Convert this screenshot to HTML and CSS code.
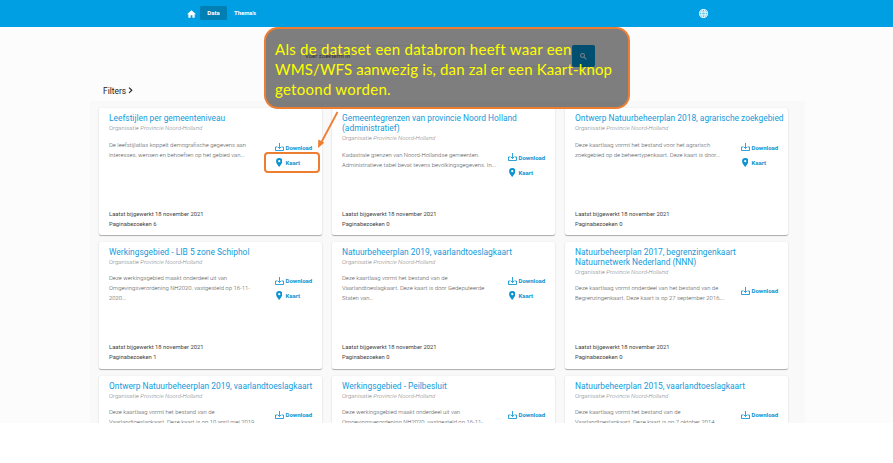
FILE: index.html
```
<!DOCTYPE html>
<html lang="nl">
<head>
<meta charset="utf-8">
<title>Data</title>
<link rel="stylesheet" href="styles.css">
</head>
<body>
<svg width="0" height="0" class="defs">
  <symbol id="dl" viewBox="0 0 18 16"><path d="M4.500 8H1v7h16V8h-3.500M9 0v11M5.500 7.500L9 11l3.500-3.500" fill="none" stroke="currentColor" stroke-width="1.700"/></symbol>
  <symbol id="pin" viewBox="0 0 14 20"><path fill="currentColor" fill-rule="evenodd" d="M7 0a7 7 0 0 0-7 7c0 5.200 7 13 7 13s7-7.800 7-13a7 7 0 0 0-7-7zm0 9.500a2.500 2.500 0 1 1 0-5 2.500 2.500 0 0 1 0 5z"/></symbol>
</svg>
<div class="app">
  <header>
    <nav>
      <svg class="home" viewBox="2 3 20 17"><path fill="#fff" d="M10 20v-6h4v6h5v-8h3L12 3 2 12h3v8z"/></svg>
      <a class="active">Data</a><a class="link">Thema's</a>
    </nav>
    <svg class="globe" viewBox="0 0 20 20" fill="none" stroke="#fff" stroke-width="2"><circle cx="10" cy="10" r="9" fill="#fff" fill-opacity=".35"/><ellipse cx="10" cy="10" rx="4" ry="9"/><path d="M2 7h16M2 13h16"/></svg>
  </header>
  <div class="search"><span>Voer zoekterm in</span><button><svg viewBox="0 0 18 18" fill="none" stroke="#fff" stroke-width="2.600"><circle cx="6.500" cy="6.500" r="5"/><path d="M10.500 10.500l6 6"/></svg></button></div>
  <div class="filters">Filters <svg viewBox="0 0 6 8"><path d="M1.200 .8L4.600 4 1.200 7.200" fill="none" stroke="#222" stroke-width="1.400"/></svg></div>
  <main>
    <article>
      <h2>Leefstijlen per gemeenteniveau</h2><p class="org">Organisatie <i>Provincie Noord-Holland</i></p>
      <div class="row"><p class="desc">De leefstijlatlas koppelt demografische gegevens aan<br>interesses, wensen en behoeften op het gebied van...</p>
      <div class="acts"><a><svg class="dl"><use href="#dl"/></svg>Download</a><a><svg class="pin"><use href="#pin"/></svg>Kaart</a></div></div>
      <footer>Laatst bijgewerkt 18 november 2021<br>Paginabezoeken 6</footer>
    </article>
    <article>
      <h2>Gemeentegrenzen van provincie Noord Holland<br>(administratief)</h2><p class="org">Organisatie <i>Provincie Noord-Holland</i></p>
      <div class="row"><p class="desc">Kadastrale grenzen van Noord-Hollandse gemeenten.<br>Administratieve tabel bevat tevens bevolkingsgegevens. In...</p>
      <div class="acts"><a><svg class="dl"><use href="#dl"/></svg>Download</a><a><svg class="pin"><use href="#pin"/></svg>Kaart</a></div></div>
      <footer>Laatst bijgewerkt 18 november 2021<br>Paginabezoeken 0</footer>
    </article>
    <article>
      <h2>Ontwerp Natuurbeheerplan 2018, agrarische zoekgebied</h2><p class="org">Organisatie <i>Provincie Noord-Holland</i></p>
      <div class="row"><p class="desc">Deze kaartlaag vormt het bestand voor het agrarisch<br>zoekgebied op de beheertypenkaart. Deze kaart is door...</p>
      <div class="acts"><a><svg class="dl"><use href="#dl"/></svg>Download</a><a><svg class="pin"><use href="#pin"/></svg>Kaart</a></div></div>
      <footer>Laatst bijgewerkt 18 november 2021<br>Paginabezoeken 0</footer>
    </article>
    <article>
      <h2 class="wide">Werkingsgebied - LIB 5 zone Schiphol</h2><p class="org">Organisatie <i>Provincie Noord-Holland</i></p>
      <div class="row"><p class="desc">Deze werkingsgebied maakt onderdeel uit van<br>Omgevingsverordening NH2020, vastgesteld op 16-11-<br>2020...</p>
      <div class="acts"><a><svg class="dl"><use href="#dl"/></svg>Download</a><a><svg class="pin"><use href="#pin"/></svg>Kaart</a></div></div>
      <footer>Laatst bijgewerkt 18 november 2021<br>Paginabezoeken 1</footer>
    </article>
    <article>
      <h2>Natuurbeheerplan 2019, vaarlandtoeslagkaart</h2><p class="org">Organisatie <i>Provincie Noord-Holland</i></p>
      <div class="row"><p class="desc">Deze kaartlaag vormt het bestand van de<br>Vaarlandtoeslagkaart. Deze kaart is door Gedeputeerde<br>Staten van...</p>
      <div class="acts"><a><svg class="dl"><use href="#dl"/></svg>Download</a><a><svg class="pin"><use href="#pin"/></svg>Kaart</a></div></div>
      <footer>Laatst bijgewerkt 18 november 2021<br>Paginabezoeken 0</footer>
    </article>
    <article>
      <h2>Natuurbeheerplan 2017, begrenzingenkaart<br>Natuurnetwerk Nederland (NNN)</h2><p class="org">Organisatie <i>Provincie Noord-Holland</i></p>
      <div class="row"><p class="desc">Deze kaartlaag vormt onderdeel van het bestand van de<br>Begrenzingenkaart. Deze kaart is op 27 september 2016,...</p>
      <div class="acts"><a><svg class="dl"><use href="#dl"/></svg>Download</a></div></div>
      <footer>Laatst bijgewerkt 18 november 2021<br>Paginabezoeken 0</footer>
    </article>
    <article>
      <h2>Ontwerp Natuurbeheerplan 2019, vaarlandtoeslagkaart</h2><p class="org">Organisatie <i>Provincie Noord-Holland</i></p>
      <div class="row"><p class="desc">Deze kaartlaag vormt het bestand van de<br>Vaarlandtoeslagkaart. Deze kaart is op 10 april mei 2019</p>
      <div class="acts"><a><svg class="dl"><use href="#dl"/></svg>Download</a></div></div>
    </article>
    <article>
      <h2>Werkingsgebied - Peilbesluit</h2><p class="org">Organisatie <i>Provincie Noord-Holland</i></p>
      <div class="row"><p class="desc">Deze werkingsgebied maakt onderdeel uit van<br>Omgevingsverordening NH2020, vastgesteld op 16-11-</p>
      <div class="acts"><a><svg class="dl"><use href="#dl"/></svg>Download</a></div></div>
    </article>
    <article>
      <h2>Natuurbeheerplan 2015, vaarlandtoeslagkaart</h2><p class="org">Organisatie <i>Provincie Noord-Holland</i></p>
      <div class="row"><p class="desc">Deze kaartlaag vormt het bestand van de<br>Vaarlandtoeslagkaart. Deze kaart is op 7 oktober 2014</p>
      <div class="acts"><a><svg class="dl"><use href="#dl"/></svg>Download</a></div></div>
    </article>
  </main>
</div>
<div class="callout"><span class="l1">Als de dataset een databron heeft waar een</span><span class="l2">WMS/WFS aanwezig is, dan zal er een Kaart-knop</span><span class="l3">getoond worden.</span></div>
<div class="ring"></div>
<svg class="arrow" viewBox="0 0 24 40"><path d="M21.500 2L5.500 32" stroke="#ed7d31" stroke-width="1.800"/><path d="M2 38l.3-8.500 6 3.200z" fill="#ed7d31"/></svg>
</body>
</html>
```
FILE: styles.css
```
* { box-sizing: border-box; }
body { margin: 0; background: #fff; font-family: Roboto, sans-serif; width: 893px; height: 463px; overflow: hidden; position: relative; }
.defs { position: absolute; }
.app { height: 423px; overflow: hidden; background: #fcfcfc; }
header { height: 27px; background: #009ee2; display: flex; align-items: flex-start; padding: 6px 185px 0 187px; justify-content: space-between; }
nav { display: flex; color: #fff; font-size: 6px; font-weight: 700; line-height: 14px; }
.home { width: 9px; height: 8px; margin: 4px 4px 0 0; }
.active { width: 27px; height: 14px; background: #007fb5; border-radius: 1.5px; text-align: center; }
.link { margin-left: 7px; white-space: nowrap; letter-spacing: -.05px; }
.globe { width: 9px; height: 9px; margin-top: 3px; }
.search { width: 295px; height: 22px; margin: 18px 0 0 300px; border: 1px solid #eee; display: flex; justify-content: space-between; font-size: 6px; line-height: 20px; padding-left: 4px; color: #666; background: #fff; }
.search button { width: 23px; height: 22px; margin: -1px -1px 0 0; border: 0; border-radius: 2px; background: #009ee2; padding: 0; display: flex; justify-content: center; align-items: center; }
.search button svg { width: 7px; height: 7px; }
.filters { height: 34px; padding: 18.500px 0 0 103px; font-size: 8.400px; line-height: 10px; color: #222; }
.filters svg { width: 5px; height: 6.5px; }
main { width: 715px; height: 330px; margin-left: 90px; padding: 7px 0 0 9px; background: #f9f9f9; display: grid; grid-template-columns: repeat(3, 223px); grid-auto-rows: 127px; column-gap: 10px; row-gap: 6.8px; }
article { background: #fff; border-radius: 2px; box-shadow: 0 1px 1px rgba(0,0,0,.3), 0 0 2px rgba(0,0,0,.08); padding: 5px 10px 0; display: flex; flex-direction: column; }
h2 { margin: 0; font-size: 8.400px; line-height: 10px; font-weight: 400; color: #139bdc; white-space: nowrap; }
.wide { letter-spacing: .04px; }
.org { margin: 0; font-size: 6px; line-height: 10px; color: #888; font-weight: 300; }
.row { display: flex; justify-content: space-between; margin-top: 6.500px; }
.desc { margin: 0; font-size: 5.920px; line-height: 10px; color: #555; font-weight: 300; white-space: nowrap; }
.acts { width: 37.500px; flex: none; }
.acts a { display: flex; align-items: center; height: 15px; color: #0b93d2; font-size: 6px; font-weight: 700; }
.dl { width: 9px; height: 8px; margin-right: 2px; flex: none; }
.pin { width: 6.500px; height: 9px; margin: 0 3.200px 0 1.300px; flex: none; }
footer { margin-top: auto; margin-bottom: 6.500px; font-size: 5.850px; line-height: 10px; color: #444; }
.callout { position: absolute; left: 264px; top: 27px; width: 366px; height: 82px; border: 2px solid #ed7d31; border-radius: 14px; background: rgba(0,0,0,.5); color: #ff0; font-family: Lato, sans-serif; font-size: 15px; line-height: 20px; padding: 9.500px 9px; white-space: nowrap; }
.callout span { display: block; }
.l1 { letter-spacing: .27px; }
.l2 { letter-spacing: .13px; }
.l3 { letter-spacing: .27px; }
.ring { position: absolute; left: 264px; top: 152px; width: 56px; height: 21px; border: 2px solid #ed7d31; border-radius: 4px; }
.arrow { position: absolute; left: 316px; top: 110px; width: 24px; height: 40px; }
```
